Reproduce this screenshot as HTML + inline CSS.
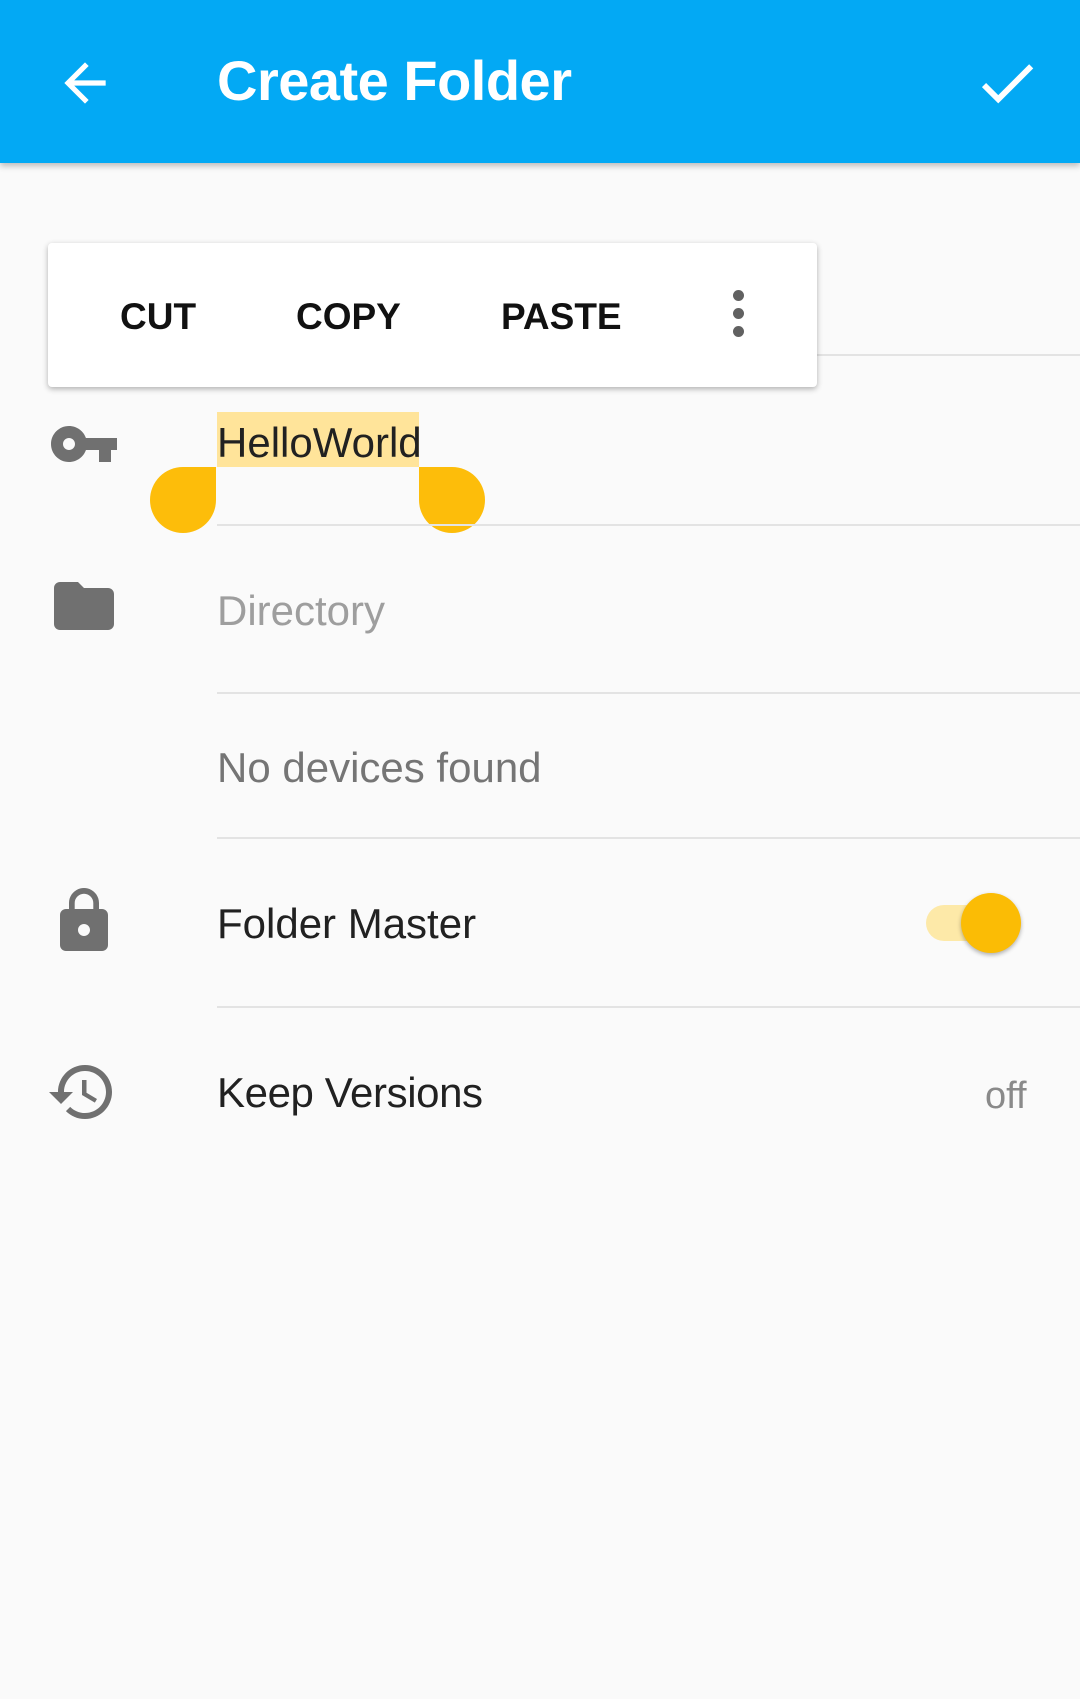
<!DOCTYPE html>
<html><head><meta charset="utf-8"><style>
*{margin:0;padding:0;box-sizing:border-box}
body{width:1080px;height:1699px;background:#fafafa;font-family:"Liberation Sans",sans-serif;position:relative;overflow:hidden}
.bar{position:absolute;left:0;top:0;width:1080px;height:163px;background:#03a9f4;box-shadow:0 3px 6px rgba(0,0,0,.25)}
.title{position:absolute;left:217px;top:48px;color:#fff;font-size:56px;font-weight:bold;letter-spacing:-0.5px}
.abs{position:absolute}
.line{position:absolute;height:2px;background:#e3e3e3;right:0}
.t{position:absolute;font-size:42px;color:#212121;line-height:1}
.pop{position:absolute;left:48px;top:243px;width:769px;height:144px;background:#fff;border-radius:4px;box-shadow:0 2px 6px rgba(0,0,0,.3)}
.pop span{position:absolute;top:55px;font-size:37px;font-weight:bold;color:#111;line-height:1}
</style></head><body>
<div class="bar">
<svg class="abs" style="left:54px;top:52px" width="62" height="62" viewBox="0 0 24 24"><path d="M20 11H7.83l5.59-5.59L12 4l-8 8 8 8 1.41-1.41L7.83 13H20v-2z" fill="#fff"/></svg>
<div class="title">Create Folder</div>
<svg class="abs" style="left:972px;top:48px" width="70" height="70" viewBox="0 0 24 24"><path d="M9 16.17L4.83 12l-1.42 1.41L9 19 21 7l-1.41-1.41z" fill="#fff"/></svg>
</div>

<div class="line" style="left:817px;top:354px"></div>
<div class="pop">
<span style="left:72px">CUT</span>
<span style="left:248px">COPY</span>
<span style="left:453px">PASTE</span>
<div class="abs" style="left:685px;top:47px;width:11px;height:11px;border-radius:50%;background:#616161"></div>
<div class="abs" style="left:685px;top:65px;width:11px;height:11px;border-radius:50%;background:#616161"></div>
<div class="abs" style="left:685px;top:83px;width:11px;height:11px;border-radius:50%;background:#616161"></div>
</div>

<svg class="abs" style="left:48px;top:408px" width="72" height="72" viewBox="0 0 24 24"><path d="M12.65 10C11.830 7.67 9.61 6 7 6c-3.31 0-6 2.69-6 6s2.69 6 6 6c2.61 0 4.83-1.67 5.65-4H17v4h4v-4h2v-4H12.65zM7 14c-1.1 0-2-.9-2-2s.9-2 2-2 2 .9 2 2-.9 2-2 2z" fill="#707070"/></svg>
<div class="abs" style="left:217px;top:412px;width:202px;height:55px;background:#ffe49a"></div>
<div class="t" style="left:217px;top:422px">HelloWorld</div>
<div class="abs" style="left:150px;top:467px;width:66px;height:66px;background:#fdbd0a;border-radius:50% 0 50% 50%"></div>
<div class="abs" style="left:419px;top:467px;width:66px;height:66px;background:#fdbd0a;border-radius:0 50% 50% 50%"></div>
<div class="line" style="left:217px;top:524px"></div>

<svg class="abs" style="left:48px;top:570px" width="72" height="72" viewBox="0 0 24 24"><path d="M10 4H4c-1.1 0-2 .9-2 2v12c0 1.1.9 2 2 2h16c1.1 0 2-.9 2-2V8c0-1.1-.9-2-2-2h-8l-2-2z" fill="#707070"/></svg>
<div class="t" style="left:217px;top:590px;color:#9e9e9e">Directory</div>
<div class="line" style="left:217px;top:692px"></div>

<div class="t" style="left:217px;top:747px;color:#757575">No devices found</div>
<div class="line" style="left:217px;top:837px"></div>

<svg class="abs" style="left:48px;top:885px" width="72" height="72" viewBox="0 0 24 24"><path d="M18 8h-1V6c0-2.76-2.24-5-5-5S7 3.24 7 6v2H6c-1.1 0-2 .9-2 2v10c0 1.1.9 2 2 2h12c1.1 0 2-.9 2-2V10c0-1.1-.9-2-2-2zm-6 9c-1.1 0-2-.9-2-2s.9-2 2-2 2 .9 2 2-.9 2-2 2zm3.1-9H8.9V6c0-1.71 1.39-3.1 3.1-3.1 1.71 0 3.1 1.39 3.1 3.1v2z" fill="#707070"/></svg>
<div class="t" style="left:217px;top:903px">Folder Master</div>
<div class="abs" style="left:926px;top:905px;width:80px;height:36px;border-radius:18px;background:#fde9a8"></div>
<div class="abs" style="left:961px;top:893px;width:60px;height:60px;border-radius:50%;background:#fbbc05;box-shadow:0 2px 4px rgba(0,0,0,.3)"></div>
<div class="line" style="left:217px;top:1006px"></div>

<svg class="abs" style="left:46px;top:1056px" width="72" height="72" viewBox="0 0 24 24"><path d="M13 3c-4.97 0-9 4.03-9 9H1l3.89 3.89.07.14L9 12H6c0-3.87 3.13-7 7-7s7 3.13 7 7-3.13 7-7 7c-1.93 0-3.68-.79-4.94-2.06l-1.42 1.42C8.27 19.99 10.51 21 13 21c4.97 0 9-4.03 9-9s-4.03-9-9-9zm-1 5v5l4.28 2.54.72-1.21-3.5-2.08V8H12z" fill="#707070"/></svg>
<div class="t" style="left:217px;top:1072px;letter-spacing:-0.4px">Keep Versions</div>
<div class="t" style="left:985px;top:1077px;color:#8a8a8a;font-size:38px">off</div>
</body></html>
